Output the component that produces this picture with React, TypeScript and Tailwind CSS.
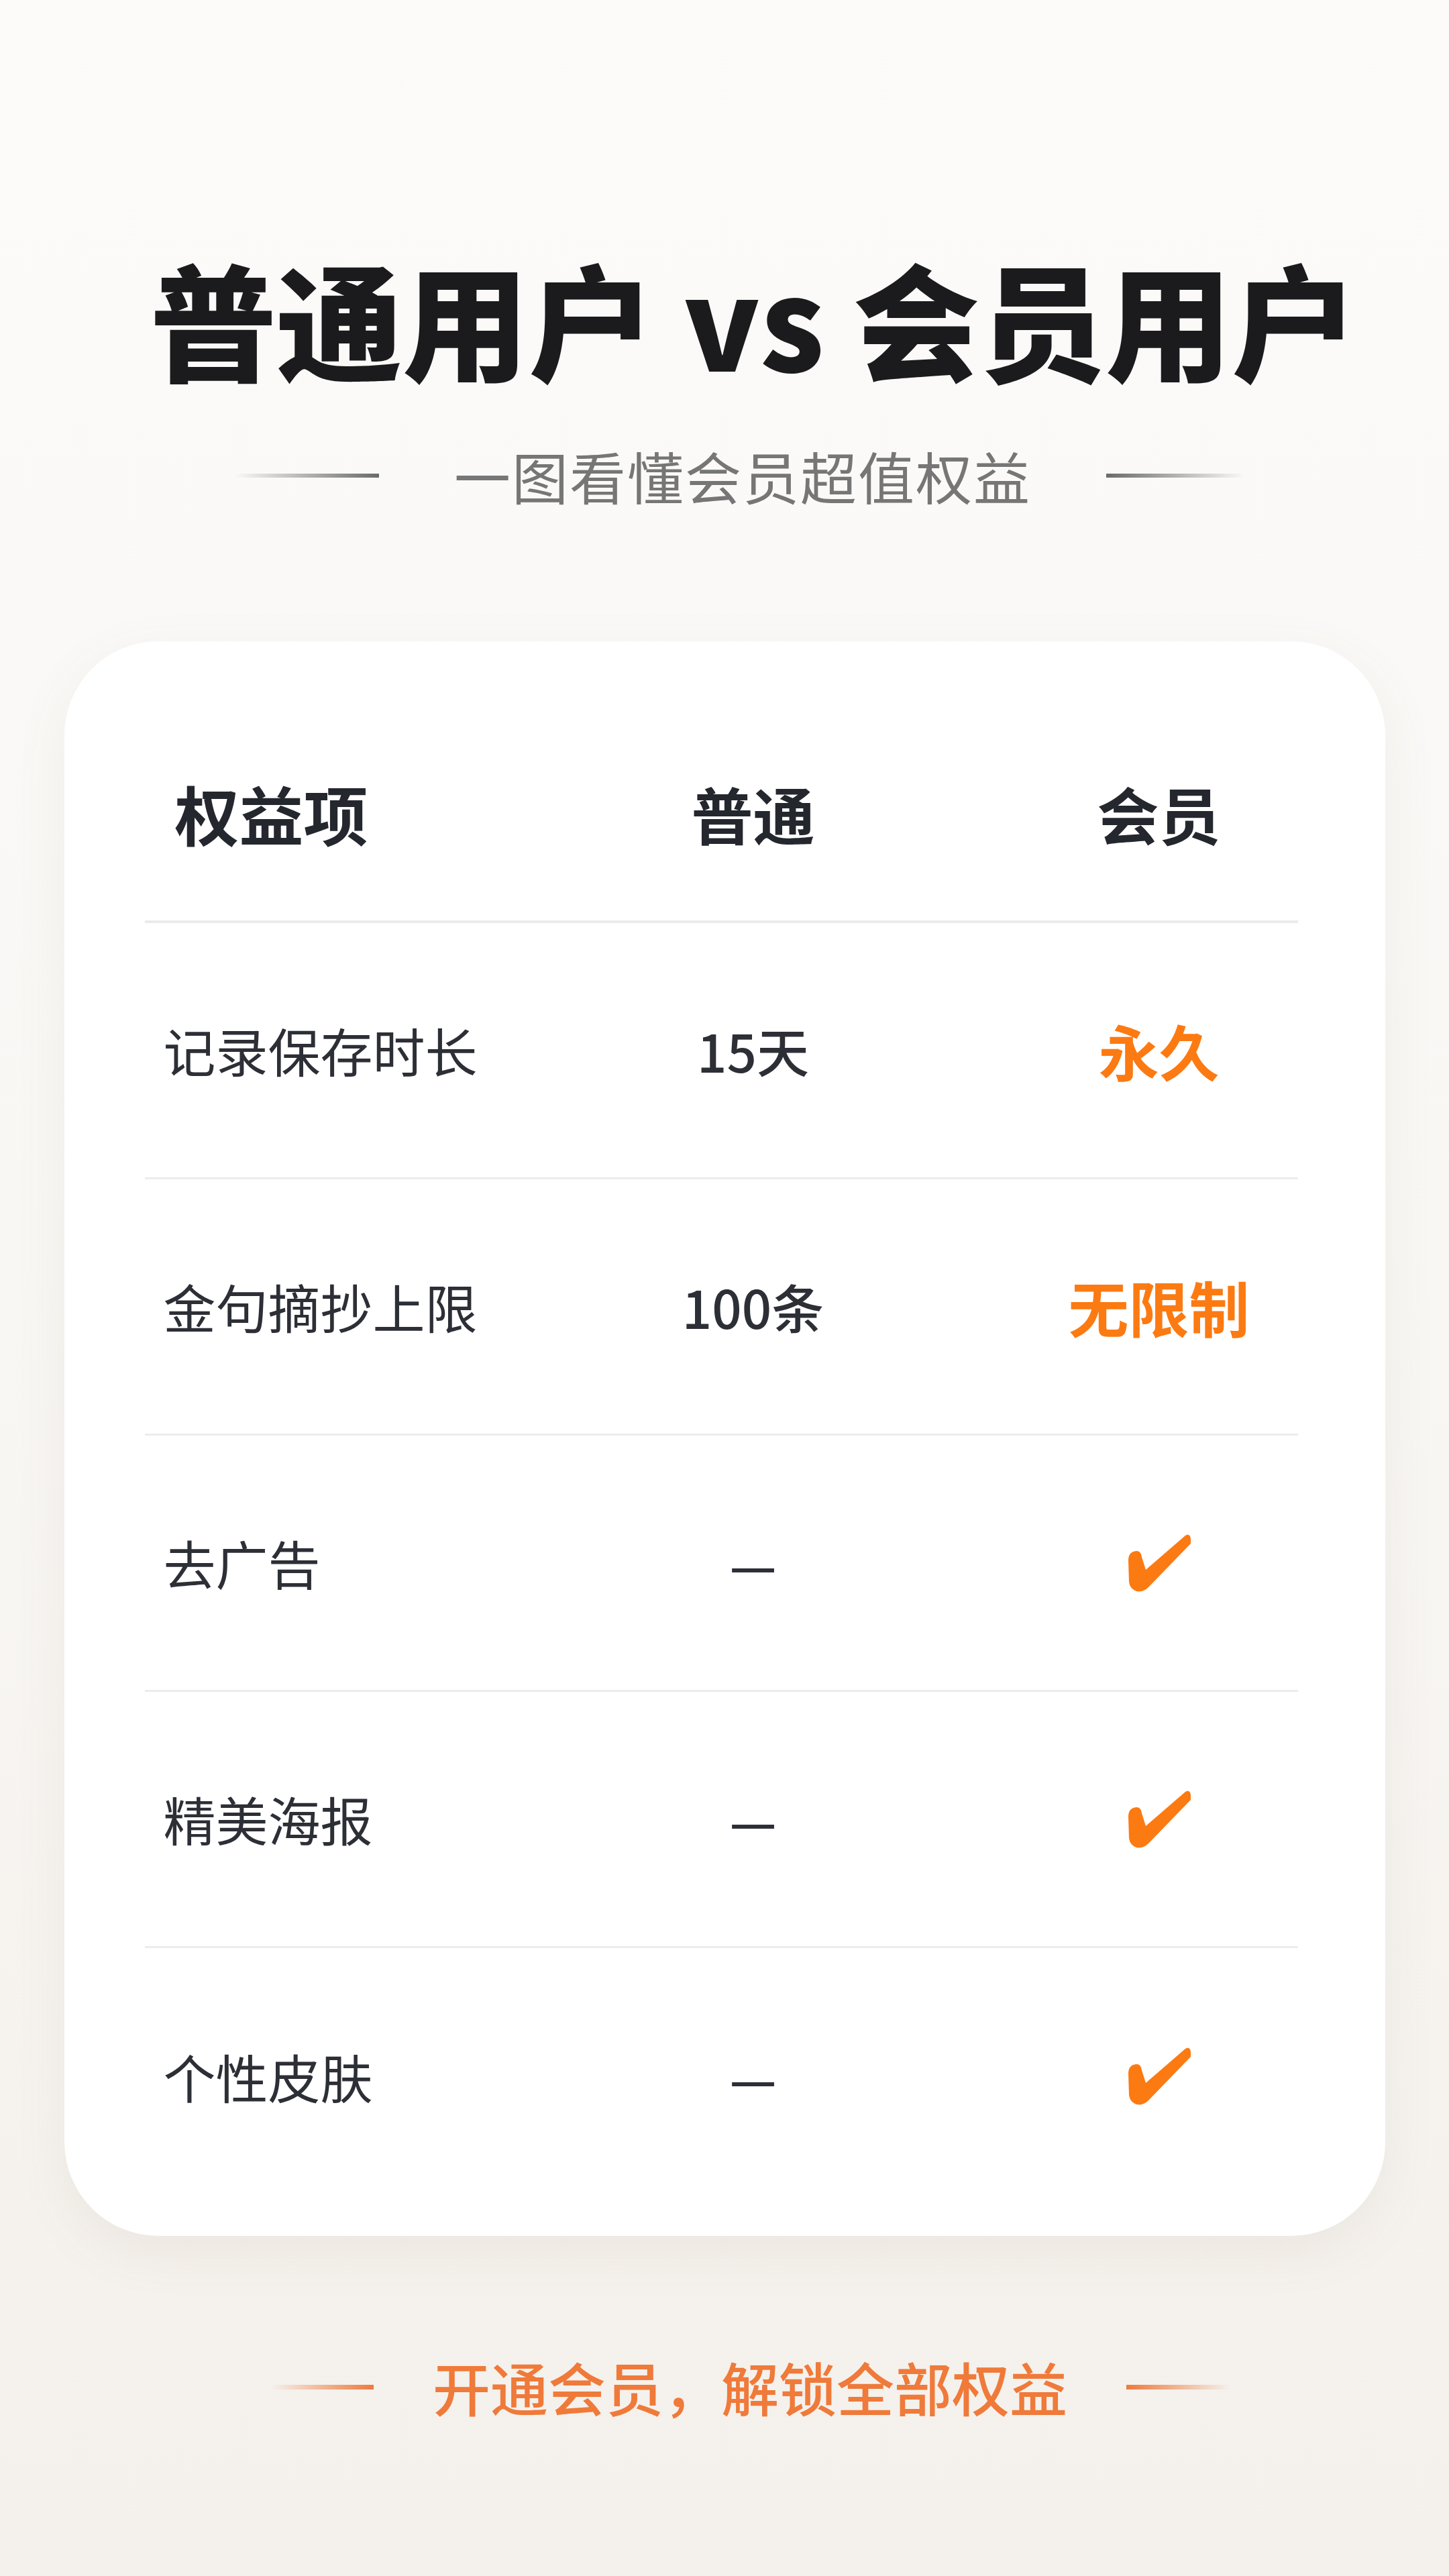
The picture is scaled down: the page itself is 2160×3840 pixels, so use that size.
const font = { fontFamily: '"Noto Sans CJK SC", "Noto Sans", sans-serif' };

function Check() {
  return (
    <svg width="98" height="92" viewBox="35 28 98 92" className="inline-block">
      <path
        d="M38 70 Q38 57 50 56 Q57 56 58 65 L64 84 L123 33 Q130 29 131 38 L131 45 L68 110 Q60 118 50 116 Q40 112 39 102 Z"
        fill="#FC7A12"
      />
    </svg>
  );
}

const rows: { label: string; normal: string; vip: string | null }[] = [
  { label: "记录保存时长", normal: "15天", vip: "永久" },
  { label: "金句摘抄上限", normal: "100条", vip: "无限制" },
  { label: "去广告", normal: "—", vip: null },
  { label: "精美海报", normal: "—", vip: null },
  { label: "个性皮肤", normal: "—", vip: null },
];

export default function App() {
  return (
    <div
      style={font}
      className="w-[2160px] h-[3840px] bg-gradient-to-b from-[#fcfbfa] via-[#f9f7f4] to-[#f4f0eb] flex flex-col items-center"
    >
      {/* title */}
      <h1 className="mt-[378px] pl-[88px] text-[188px] leading-none font-black text-[#1b1b1d] whitespace-nowrap">
        普通用户 vs 会员用户
      </h1>

      <div className="mt-[101px] pl-[44px] flex items-center gap-[112px]">
        <div className="w-[216px] h-[6px] bg-gradient-to-r from-transparent to-[#6b6b6b]" />
        <p className="text-[84px] leading-none text-[#767676] tracking-[2px]">一图看懂会员超值权益</p>
        <div className="w-[206px] h-[6px] bg-gradient-to-l from-transparent to-[#6b6b6b]" />
      </div>

      {/* table card */}
      <div className="mt-[205px] w-[1969px] bg-white rounded-[140px] shadow-[0_24px_80px_rgba(120,100,80,0.08)] pt-[96px] pb-[47px] pl-[120px] pr-[130px]">
        <div className="flex items-center h-[324px] border-b-4 border-[#ebebed]">
          <div className="flex-1 pl-[45px] text-[96px] font-bold text-[#24272e]">权益项</div>
          <div className="w-[796px] text-center text-[92px] font-bold text-[#24272e]">普通</div>
          <div className="w-[414px] text-center text-[92px] font-bold text-[#24272e]">会员</div>
        </div>
        {rows.map((r, i) => (
          <div
            key={r.label}
            className={
              "flex items-center h-[382px] " + (i < rows.length - 1 ? "border-b-[3px] border-[#ececee]" : "")
            }
          >
            <div className="flex-1 pl-[28px] text-[78px] text-[#2d2f36]">{r.label}</div>
            <div className="w-[796px] text-center text-[78px] text-[#2d2f36] font-medium">{r.normal}</div>
            <div className="w-[414px] flex justify-center text-[90px] font-bold text-[#fc7a12]">
              {r.vip ? r.vip : <Check />}
            </div>
          </div>
        ))}
      </div>

      {/* footer */}
      <div className="mt-[182px] pl-[78px] flex items-center gap-[88px]">
        <div className="w-[152px] h-[7px] bg-gradient-to-r from-transparent to-[#ee7a3c]" />
        <p className="text-[86px] leading-none font-medium text-[#ef7a3a]">开通会员，解锁全部权益</p>
        <div className="w-[154px] h-[7px] bg-gradient-to-l from-transparent to-[#ee7a3c]" />
      </div>
    </div>
  );
}
